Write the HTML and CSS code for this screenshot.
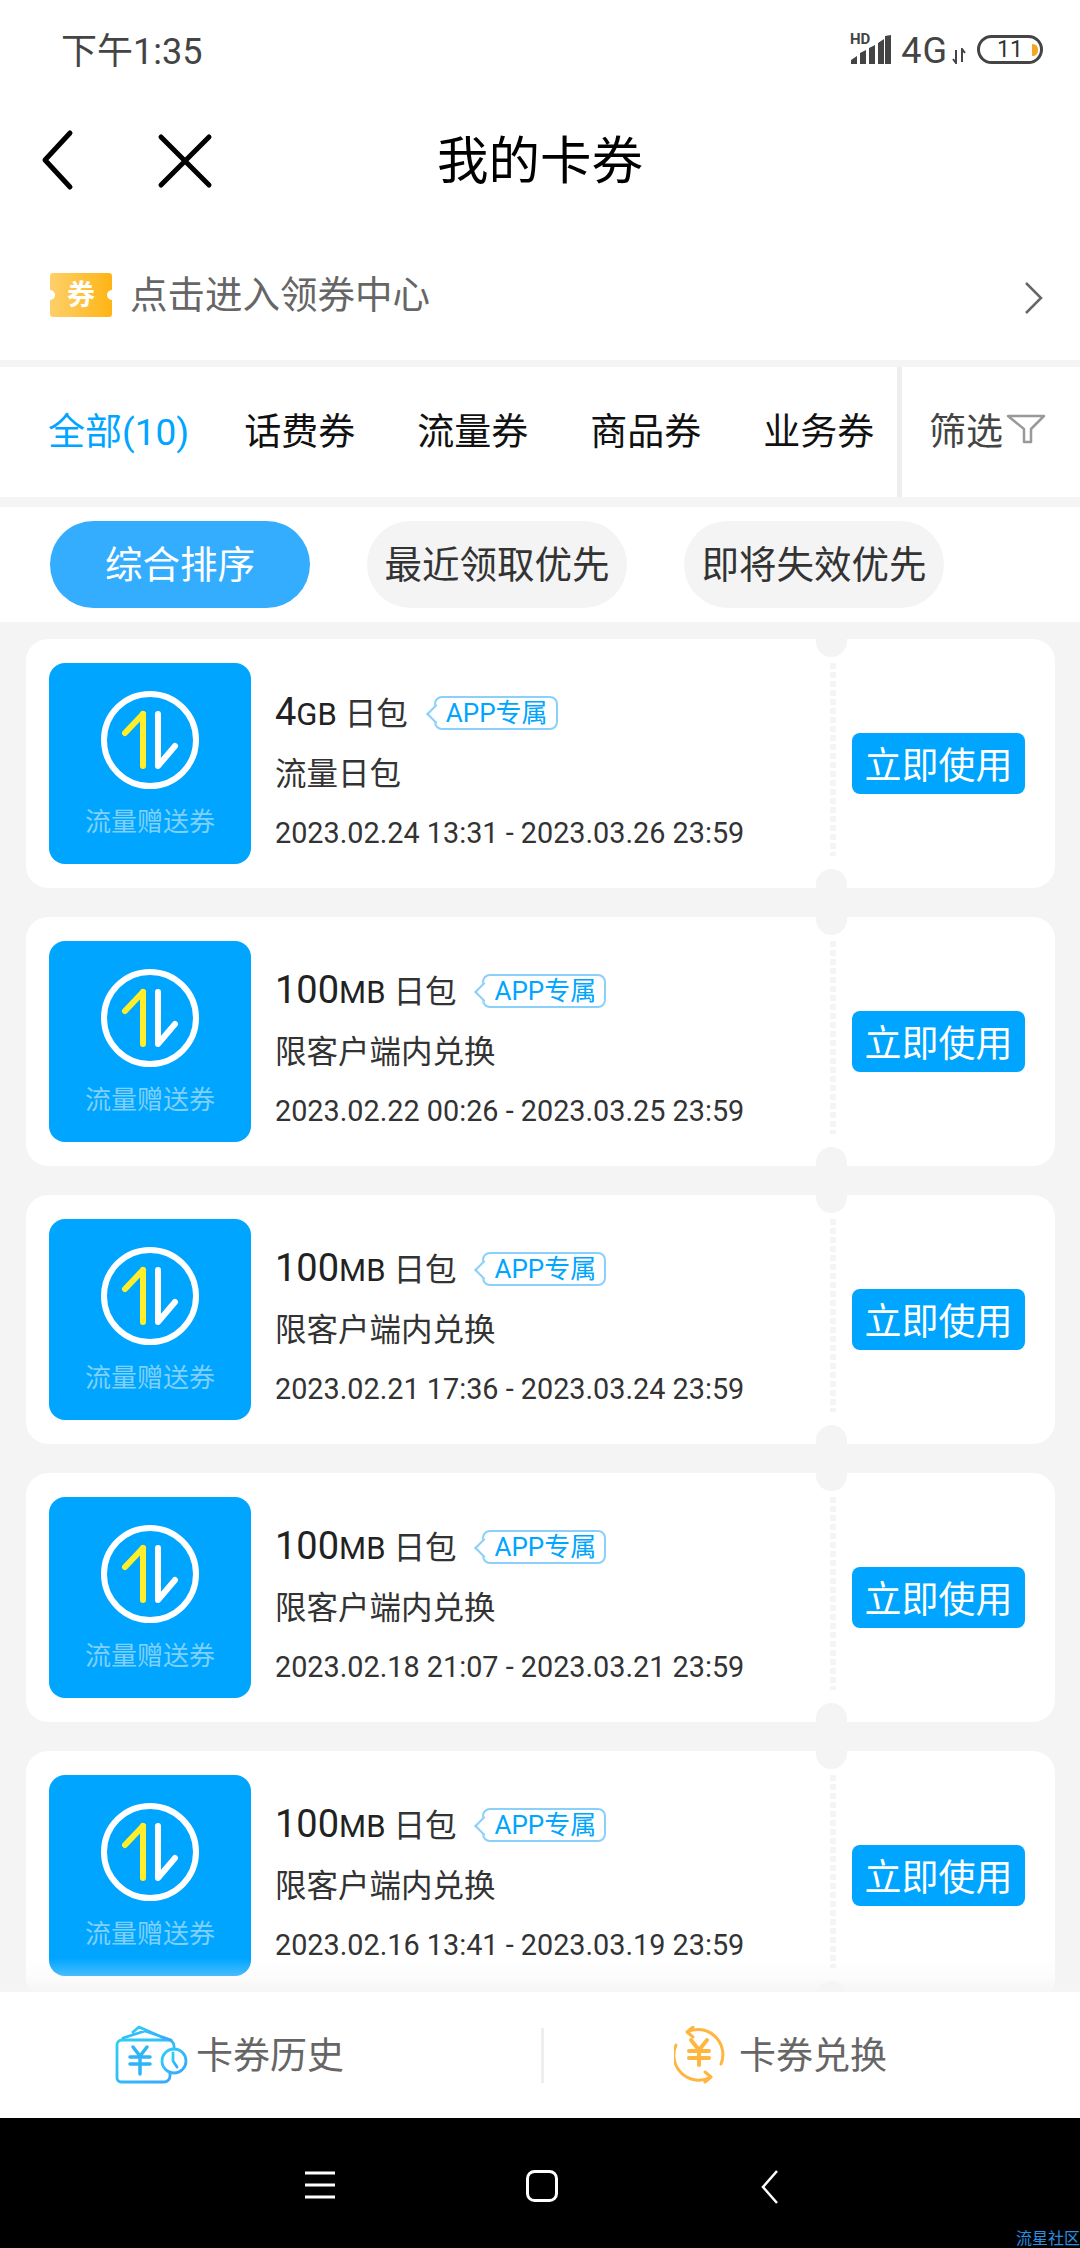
FILE: index.html
```html
<!DOCTYPE html>
<html lang="zh">
<head>
<meta charset="utf-8">
<title>我的卡券</title>
<link rel="stylesheet" href="styles.css">
</head>
<body>
<div class="phone">
  <div class="status">
    <span class="time">下午1:35</span>
    <div class="status-right">
      <svg class="signal" width="42" height="36" viewBox="0 -6 42 36"><text class="hd" x="0" y="9">HD</text><g fill="#444"><path d="M1 29v-4l6-4v8zM10 29V18l6-3v14zM19 29V13l6-3v19zM28 29V8l6-4v25zM35 29V1l6-1v29z"/></g></svg>
      <span class="net">4G</span>
      <svg class="updown" width="14" height="16" viewBox="0 0 14 16"><path d="M4 2v13L1 11M10 14V1l3 4" fill="none" stroke="#444" stroke-width="2"/></svg>
      <div class="battery"><span class="batt-num">11</span><i class="batt-level"></i></div>
    </div>
  </div>
  <header class="nav">
    <svg class="nav-back" width="34" height="64" viewBox="0 0 34 64"><path d="M29 4 4 31l25 27" fill="none" stroke="#000" stroke-width="5" stroke-linecap="round" stroke-linejoin="round"/></svg>
    <svg class="nav-close" width="56" height="56" viewBox="0 0 56 56"><path d="M4 4l48 48M52 4 4 52" fill="none" stroke="#000" stroke-width="5" stroke-linecap="round"/></svg>
    <h1 class="nav-title">我的卡券</h1>
  </header>
  <a class="banner">
    <svg class="ticket" width="62" height="44" viewBox="0 0 62 44"><defs><linearGradient id="tk" x1="0" x2="1" y1="0" y2="0"><stop offset="0" stop-color="#fdd06a"/><stop offset="1" stop-color="#ffb415"/></linearGradient></defs><path d="M3 0h56a3 3 0 0 1 3 3v14a5 5 0 0 0 0 10v14a3 3 0 0 1-3 3H3a3 3 0 0 1-3-3V27a5 5 0 0 0 0-10V3a3 3 0 0 1 3-3z" fill="url(#tk)"/><text class="ticket-text" x="31" y="32">券</text></svg>
    <span class="banner-text">点击进入领券中心</span>
    <svg class="banner-arrow" width="20" height="34" viewBox="0 0 20 34"><path d="M2 2l15 15L2 32" fill="none" stroke="#666" stroke-width="2.500"/></svg>
  </a>
  <nav class="tabs">
    <div class="tab-list">
      <span class="tab tab-on">全部(10)</span>
      <span class="tab">话费券</span>
      <span class="tab">流量券</span>
      <span class="tab">商品券</span>
      <span class="tab">业务券</span>
    </div>
    <div class="filter">
      <span>筛选</span>
      <svg class="filter-icon" width="40" height="30" viewBox="0 0 40 30"><path d="M2 2h36L25 15v13h-7V15z" fill="none" stroke="#999" stroke-width="2.500" stroke-linejoin="round"/></svg>
    </div>
  </nav>
  <div class="sort">
    <span class="pill pill-on">综合排序</span>
    <span class="pill">最近领取优先</span>
    <span class="pill">即将失效优先</span>
  </div>
  <main class="list">
    <article class="card">
      <div class="thumb">
        <svg width="104" height="104" viewBox="0 0 104 104"><circle cx="52" cy="52" r="46" fill="none" stroke="#fff" stroke-width="6"/><path d="M45 26v52" stroke="#ffee2a" stroke-width="6" stroke-linecap="round" fill="none"/><path d="M45 26 27 45" stroke="#ffee2a" stroke-width="6" stroke-linecap="round" fill="none"/><path d="M60 26v52l17-20" stroke="#fff" stroke-width="6" stroke-linecap="round" stroke-linejoin="round" fill="none"/></svg>
        <span class="thumb-label">流量赠送券</span>
      </div>
      <div class="info">
        <div class="info-title"><span class="amt">4</span><span class="unit">GB</span><span class="pack">日包</span><span class="tag">APP专属</span></div>
        <div class="info-sub">流量日包</div>
        <div class="info-date">2023.02.24 13:31 - 2023.03.26 23:59</div>
      </div>
      <i class="dash"></i>
      <div class="action"><span class="use">立即使用</span></div>
    </article>
    <article class="card">
      <div class="thumb">
        <svg width="104" height="104" viewBox="0 0 104 104"><circle cx="52" cy="52" r="46" fill="none" stroke="#fff" stroke-width="6"/><path d="M45 26v52" stroke="#ffee2a" stroke-width="6" stroke-linecap="round" fill="none"/><path d="M45 26 27 45" stroke="#ffee2a" stroke-width="6" stroke-linecap="round" fill="none"/><path d="M60 26v52l17-20" stroke="#fff" stroke-width="6" stroke-linecap="round" stroke-linejoin="round" fill="none"/></svg>
        <span class="thumb-label">流量赠送券</span>
      </div>
      <div class="info">
        <div class="info-title"><span class="amt">100</span><span class="unit">MB</span><span class="pack">日包</span><span class="tag">APP专属</span></div>
        <div class="info-sub">限客户端内兑换</div>
        <div class="info-date">2023.02.22 00:26 - 2023.03.25 23:59</div>
      </div>
      <i class="dash"></i>
      <div class="action"><span class="use">立即使用</span></div>
    </article>
    <article class="card">
      <div class="thumb">
        <svg width="104" height="104" viewBox="0 0 104 104"><circle cx="52" cy="52" r="46" fill="none" stroke="#fff" stroke-width="6"/><path d="M45 26v52" stroke="#ffee2a" stroke-width="6" stroke-linecap="round" fill="none"/><path d="M45 26 27 45" stroke="#ffee2a" stroke-width="6" stroke-linecap="round" fill="none"/><path d="M60 26v52l17-20" stroke="#fff" stroke-width="6" stroke-linecap="round" stroke-linejoin="round" fill="none"/></svg>
        <span class="thumb-label">流量赠送券</span>
      </div>
      <div class="info">
        <div class="info-title"><span class="amt">100</span><span class="unit">MB</span><span class="pack">日包</span><span class="tag">APP专属</span></div>
        <div class="info-sub">限客户端内兑换</div>
        <div class="info-date">2023.02.21 17:36 - 2023.03.24 23:59</div>
      </div>
      <i class="dash"></i>
      <div class="action"><span class="use">立即使用</span></div>
    </article>
    <article class="card">
      <div class="thumb">
        <svg width="104" height="104" viewBox="0 0 104 104"><circle cx="52" cy="52" r="46" fill="none" stroke="#fff" stroke-width="6"/><path d="M45 26v52" stroke="#ffee2a" stroke-width="6" stroke-linecap="round" fill="none"/><path d="M45 26 27 45" stroke="#ffee2a" stroke-width="6" stroke-linecap="round" fill="none"/><path d="M60 26v52l17-20" stroke="#fff" stroke-width="6" stroke-linecap="round" stroke-linejoin="round" fill="none"/></svg>
        <span class="thumb-label">流量赠送券</span>
      </div>
      <div class="info">
        <div class="info-title"><span class="amt">100</span><span class="unit">MB</span><span class="pack">日包</span><span class="tag">APP专属</span></div>
        <div class="info-sub">限客户端内兑换</div>
        <div class="info-date">2023.02.18 21:07 - 2023.03.21 23:59</div>
      </div>
      <i class="dash"></i>
      <div class="action"><span class="use">立即使用</span></div>
    </article>
    <article class="card">
      <div class="thumb">
        <svg width="104" height="104" viewBox="0 0 104 104"><circle cx="52" cy="52" r="46" fill="none" stroke="#fff" stroke-width="6"/><path d="M45 26v52" stroke="#ffee2a" stroke-width="6" stroke-linecap="round" fill="none"/><path d="M45 26 27 45" stroke="#ffee2a" stroke-width="6" stroke-linecap="round" fill="none"/><path d="M60 26v52l17-20" stroke="#fff" stroke-width="6" stroke-linecap="round" stroke-linejoin="round" fill="none"/></svg>
        <span class="thumb-label">流量赠送券</span>
      </div>
      <div class="info">
        <div class="info-title"><span class="amt">100</span><span class="unit">MB</span><span class="pack">日包</span><span class="tag">APP专属</span></div>
        <div class="info-sub">限客户端内兑换</div>
        <div class="info-date">2023.02.16 13:41 - 2023.03.19 23:59</div>
      </div>
      <i class="dash"></i>
      <div class="action"><span class="use">立即使用</span></div>
    </article>
    <div class="fade"></div>
  </main>
  <footer class="foot">
    <div class="foot-item">
      <svg width="74" height="60" viewBox="0 0 74 60"><defs><linearGradient id="wl" x1="0" x2="1" y1="0" y2="1"><stop offset="0" stop-color="#2bd0f5"/><stop offset="1" stop-color="#3aa6ff"/></linearGradient></defs><g fill="none" stroke="url(#wl)" stroke-width="2.800" stroke-linecap="round" stroke-linejoin="round"><path d="M55 47v4a6 6 0 0 1-6 6H6a4 4 0 0 1-4-4V20a5 5 0 0 1 5-5h46a6 6 0 0 1 6 6v3"/><path d="M8 13 30 6l26 9M18 7 24 2l25 11"/><circle cx="59" cy="36" r="12"/><path d="M58 28v8l4 6"/></g><path d="M18 22l7 9 7-9M15 32h20M15 39h20M25 31v18" fill="none" stroke="#2fb4f6" stroke-width="3.500" stroke-linecap="round" stroke-linejoin="round"/></svg>
      <span class="foot-label">卡券历史</span>
    </div>
    <i class="foot-line"></i>
    <div class="foot-item foot-right">
      <svg width="52" height="58" viewBox="0 0 52 58"><g fill="none" stroke="#ffb640" stroke-width="3" stroke-linecap="round" stroke-linejoin="round"><path d="M13 6A25 25 0 0 1 47 38M19 1l-6 5 6 5"/><path d="M2 19A25 25 0 0 0 37 51M31 46l6 5-6 5"/></g><path d="M17 14l8 10 8-10M15 25h20M15 32h20M25 24v15" fill="none" stroke="#ffb640" stroke-width="4" stroke-linecap="round" stroke-linejoin="round"/></svg>
      <span class="foot-label">卡券兑换</span>
    </div>
  </footer>
  <div class="sysbar">
    <svg class="sys sys-menu" width="32" height="30" viewBox="0 0 32 30"><path d="M1 3h30M1 15h30M1 27h30" stroke="#fff" stroke-width="3"/></svg>
    <svg class="sys sys-home" width="32" height="32" viewBox="0 0 32 32"><rect x="1.500" y="1.500" width="29" height="29" rx="7" fill="none" stroke="#fff" stroke-width="3"/></svg>
    <svg class="sys sys-back" width="18" height="34" viewBox="0 0 18 34"><path d="M16 1 2 17l14 16" fill="none" stroke="#fff" stroke-width="2.500"/></svg>
    <span class="mark">流星社区</span>
  </div>
</div>
</body>
</html>
```
FILE: styles.css
```css
* { box-sizing: border-box; margin: 0; padding: 0; }
html, body { background: #fff; }
body { font-family: Roboto, "Noto Sans CJK SC", sans-serif; }
.phone { width: 1080px; height: 2248px; display: flex; flex-direction: column; overflow: hidden; background: #f4f4f4; }

.status { height: 89px; flex: none; background: #fff; display: flex; justify-content: space-between; align-items: flex-start; padding: 29px 37px 0 61px; }
.time { font-size: 36px; line-height: 46px; color: #444; }
.status-right { display: flex; align-items: flex-start; padding-top: 6px; }
.signal { display: block; margin-top: -6px; }
.hd { font: 700 15px Roboto, sans-serif; fill: #444; }
.net { font-size: 36px; letter-spacing: 1px; line-height: 30px; color: #444; margin-left: 9px; margin-top: 1px; }
.updown { margin: 13px 0 0 4px; }
.battery { position: relative; width: 66px; height: 29px; margin-left: 11px; border: 3px solid #444; border-radius: 15px; display: flex; align-items: center; justify-content: center; }
.batt-num { font-size: 23px; line-height: 23px; color: #333; }
.batt-level { position: absolute; right: 2px; top: 6px; width: 6px; height: 12px; background: #f5a623; border-radius: 1px 6px 6px 1px; }

.nav { height: 140px; flex: none; background: #fff; display: flex; align-items: center; position: relative; padding-left: 41px; }
.nav-back { margin-top: 4px; }
.nav-close { margin-left: 82px; margin-top: 3px; }
.nav-title { position: absolute; left: 0; right: 0; top: 46px; text-align: center; font-weight: 400; font-size: 51.500px; line-height: 54px; color: #000; }

.banner { height: 131px; flex: none; background: #fff; display: flex; align-items: center; padding: 0 36px 0 50px; }
.ticket { flex: none; }
.ticket-text { font-size: 28px; font-weight: 700; fill: #fff; text-anchor: middle; }
.banner-text { font-size: 37.500px; color: #666; margin: 0 0 6px 18px; flex: 1; }
.banner-arrow { flex: none; margin-top: 6px; }

.tabs { height: 130px; flex: none; margin-top: 7px; display: flex; background: #fff; }
.tab-list { width: 897px; padding: 0 0 7px 48px; display: flex; align-items: center; }
.tab { font-size: 37px; color: #111; margin-left: 62px; }
.tab:first-child { margin-left: 0; }
.tab-on { color: #00a5ff; margin-right: -7px; }
.filter { flex: 1; border-left: 5px solid #eee; display: flex; align-items: center; padding: 0 0 7px 27px; font-size: 37px; color: #444; }
.filter-icon { flex: none; margin: 0 0 0 3px; }

.sort { height: 115px; flex: none; margin-top: 10px; background: #fff; padding: 14px 0 0 50px; display: flex; gap: 57px; }
.pill { width: 260px; height: 87px; border-radius: 44px; background: #f4f4f4; color: #333; font-size: 37.500px; display: flex; align-items: center; justify-content: center; padding: 0 0 6px 0; }
.pill-on { background: #35adff; color: #fff; }

.list { flex: 1; min-height: 0; position: relative; overflow: hidden; background: #f4f4f4; padding: 17px 25px 0 26px; display: flex; flex-direction: column; gap: 29px; }
.card { position: relative; flex: none; height: 249px; background: #fff; border-radius: 22px; display: flex; padding: 24px 0 0 23px; }
.card::before, .card::after { content: ""; position: absolute; left: 790px; width: 31px; height: 18px; background: #f4f4f4; }
.card::before { top: 0; border-radius: 0 0 16px 16px; }
.card::after { bottom: 0; height: 19px; border-radius: 16px 16px 0 0; }
.thumb { flex: none; width: 202px; height: 201px; border-radius: 16px; background: #00a5ff; display: flex; flex-direction: column; align-items: center; padding-top: 25px; }
.thumb svg { display: block; }
.thumb-label { font-size: 26px; line-height: 34px; margin-top: 13px; color: #7fd0fb; }
.info { flex: none; width: 579px; padding-left: 24px; }
.info-title { display: flex; align-items: baseline; height: 40px; margin-top: 29px; line-height: 40px; color: #222; }
.amt { font-size: 38px; }
.unit { font-size: 31px; }
.pack { font-size: 31.500px; margin-left: 8px; color: #333; }
.tag { position: relative; align-self: center; top: 1px; margin-left: 26px; height: 34px; line-height: 30px; padding: 0 8px 0 10px; border: 2px solid #8ad0fb; border-radius: 8px; font-size: 26px; color: #00a5ff; }
.tag::before { content: ""; position: absolute; left: -7px; top: 9px; width: 12px; height: 12px; background: #fff; border-left: 2px solid #8ad0fb; border-bottom: 2px solid #8ad0fb; transform: rotate(45deg); }
.info-sub { font-size: 31.500px; line-height: 40px; margin-top: 23px; color: #333; }
.info-date { font-size: 28.800px; line-height: 36px; margin-top: 20px; color: #333; white-space: nowrap; }
.dash { flex: none; width: 6px; height: 193px; background: repeating-linear-gradient(to bottom, #f4f4f4 0 6px, transparent 6px 9px); }
.action { flex: none; height: 201px; margin-left: 16px; display: flex; align-items: center; }
.use { width: 173px; height: 61px; border-radius: 8px; background: #00a5ff; color: #fff; font-size: 37px; display: flex; align-items: center; justify-content: center; padding-bottom: 2px; }
.fade { position: absolute; left: 0; right: 0; bottom: 0; height: 34px; background: linear-gradient(to bottom, rgba(245,245,245,0), rgba(245,245,245,.3) 55%, rgba(245,245,245,.95)); }

.foot { height: 126px; flex: none; background: #fff; display: flex; align-items: center; }
.foot-item { flex: none; width: 541px; display: flex; align-items: center; padding-left: 115px; gap: 7px; }
.foot-right { flex: 1; width: auto; padding-left: 130px; gap: 13px; }
.foot-line { flex: none; width: 3px; height: 55px; background: #eee; }
.foot-label { font-size: 37px; color: #666; margin-bottom: 5px; }

.sysbar { height: 130px; flex: none; position: relative; background: #000; display: flex; align-items: flex-start; padding: 52px 0 0 304px; }
.sys-home { margin-left: 190px; }
.sys-back { margin-left: 203px; }
.mark { position: absolute; left: 1016px; top: 112px; font-size: 16px; line-height: 18px; white-space: nowrap; color: #2b8fe0; }
```
